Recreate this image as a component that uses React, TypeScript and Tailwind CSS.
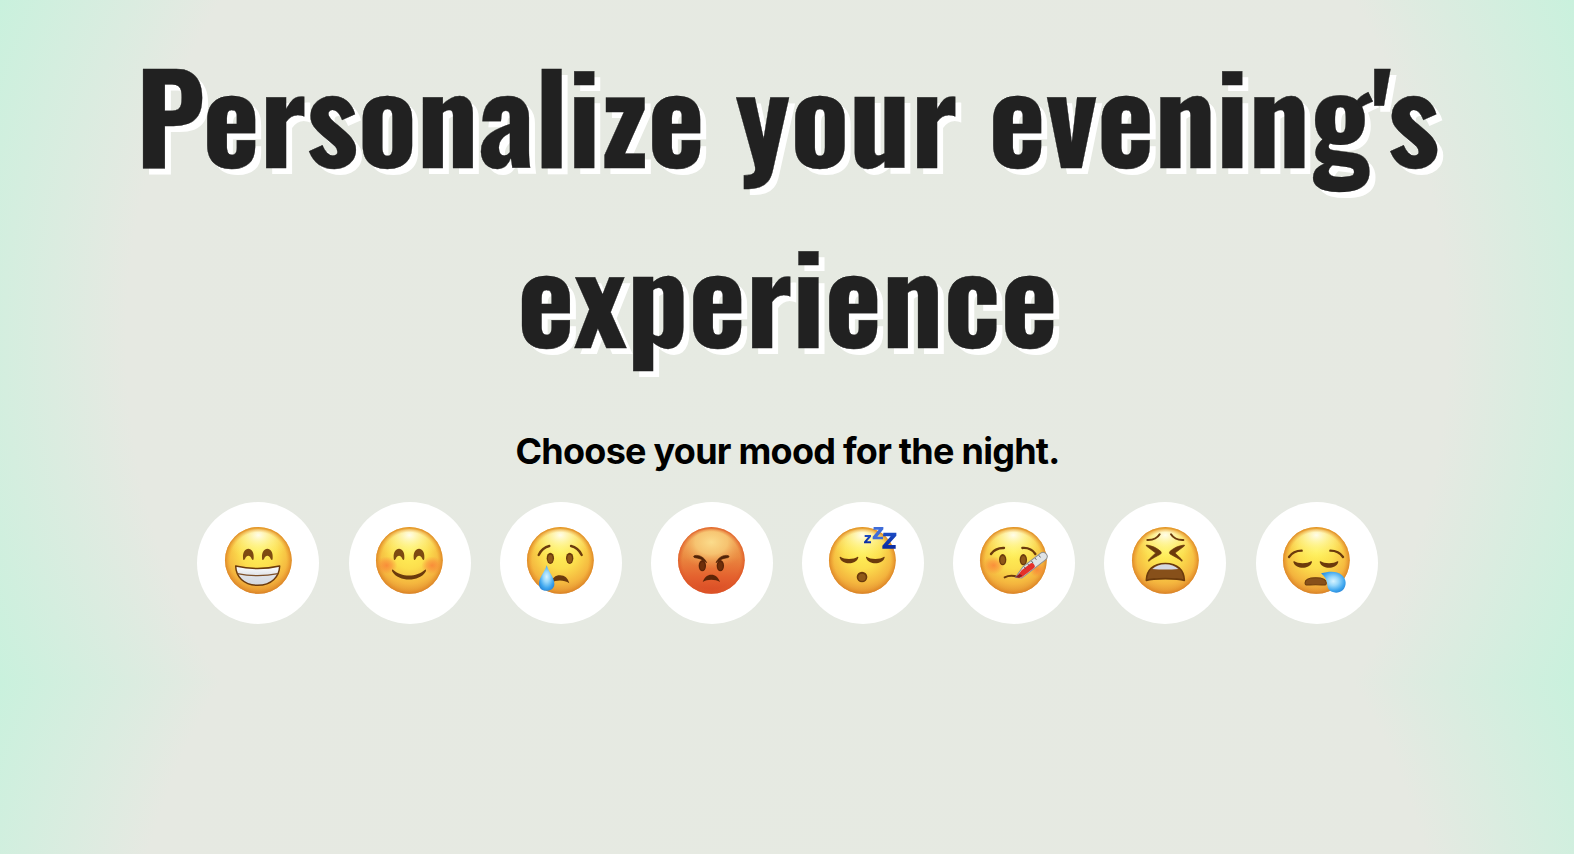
import type { ReactNode } from "react";

const BROWN = "#6b3a0c";

function Gradients() {
  return (
    <svg className="absolute size-0" aria-hidden="true">
      <defs>
        <radialGradient id="face" cx="0.5" cy="0.36" r="0.66">
          <stop offset="0" stopColor="#fff158" />
          <stop offset="0.4" stopColor="#fcdf4e" />
          <stop offset="0.75" stopColor="#f4b53e" />
          <stop offset="0.92" stopColor="#e69834" />
          <stop offset="1" stopColor="#cd7826" />
        </radialGradient>
        <radialGradient id="rim" cx="0.5" cy="0.5" r="0.5">
          <stop offset="0.84" stopColor="#f0a030" stopOpacity="0" />
          <stop offset="1" stopColor="#db8426" stopOpacity="0.9" />
        </radialGradient>
        <radialGradient id="shine" cx="0.5" cy="0.14" r="0.58">
          <stop offset="0" stopColor="#fffef2" stopOpacity="0.95" />
          <stop offset="0.4" stopColor="#fffbb8" stopOpacity="0.55" />
          <stop offset="1" stopColor="#fff26a" stopOpacity="0" />
        </radialGradient>
        <linearGradient id="angry" x1="0" y1="0" x2="0" y2="1">
          <stop offset="0" stopColor="#ee9a4a" />
          <stop offset="0.45" stopColor="#ea8840" />
          <stop offset="0.75" stopColor="#e4612e" />
          <stop offset="1" stopColor="#d94a25" />
        </linearGradient>
        <radialGradient id="angryRim" cx="0.5" cy="0.5" r="0.5">
          <stop offset="0.86" stopColor="#e2622c" stopOpacity="0" />
          <stop offset="1" stopColor="#dc5426" stopOpacity="0.75" />
        </radialGradient>
        <radialGradient id="angryShine" cx="0.5" cy="0.3" r="0.6">
          <stop offset="0" stopColor="#fbdc8c" />
          <stop offset="0.45" stopColor="#f8cc78" stopOpacity="0.85" />
          <stop offset="1" stopColor="#ee9a4c" stopOpacity="0" />
        </radialGradient>
        <radialGradient id="blush">
          <stop offset="0" stopColor="#fa7a35" stopOpacity="0.75" />
          <stop offset="0.5" stopColor="#fa8438" stopOpacity="0.5" />
          <stop offset="1" stopColor="#fa8a3a" stopOpacity="0" />
        </radialGradient>
        <linearGradient id="teeth" x1="0" y1="0" x2="0" y2="1">
          <stop offset="0" stopColor="#ffffff" />
          <stop offset="0.5" stopColor="#dfe2e8" />
          <stop offset="1" stopColor="#d3d7de" />
        </linearGradient>
        <radialGradient id="tear" cx="0.5" cy="0.45" r="0.6">
          <stop offset="0" stopColor="#d6f3ff" />
          <stop offset="0.35" stopColor="#98d8fb" />
          <stop offset="0.75" stopColor="#3ea6ee" />
          <stop offset="1" stopColor="#2a86d8" />
        </radialGradient>
        <linearGradient id="zed" x1="0" y1="0" x2="0" y2="1">
          <stop offset="0" stopColor="#1c4cc4" />
          <stop offset="1" stopColor="#0a2aa0" />
        </linearGradient>
      </defs>
    </svg>
  );
}

function Face({ label, angry = false, children }: { label: string; angry?: boolean; children: ReactNode }) {
  return (
    <svg viewBox="0 0 200 200" role="img" aria-label={label} className="h-[66.7px] w-[66.7px] overflow-visible">
      <circle cx="100" cy="100" r="100" fill={angry ? "url(#angry)" : "url(#face)"} />
      <ellipse cx="100" cy="72" rx="90" ry="66" fill={angry ? "url(#angryShine)" : "url(#shine)"} />
      <circle cx="100" cy="100" r="100" fill={angry ? "url(#angryRim)" : "url(#rim)"} />
      {children}
    </svg>
  );
}

function ArchEye({ x }: { x: number }) {
  return (
    <path
      transform={`translate(${x} 0)`}
      d="M-16 92C-17 76-10 65 0 65S17 76 16 92C16 101 12 101 9 94C6 84-6 84-9 94C-12 101-16 101-16 92Z"
      fill="#7d4a12"
    />
  );
}

function OvalEye({ x, y, dark = false }: { x: number; y: number; dark?: boolean }) {
  return (
    <g>
      <ellipse cx={x} cy={y} rx="11" ry="17" fill={dark ? "#5c2407" : BROWN} />
      <ellipse cx={x} cy={y + 1} rx="7" ry="12" fill={dark ? "#6e2e0a" : "#8f5818"} />
    </g>
  );
}

function ClosedEye({ x, y }: { x: number; y: number }) {
  return (
    <path
      transform={`translate(${x} ${y})`}
      d="M-25-9C-16-1 16-1 25-9C28-11 29-8 27-5C20 15-20 15-27-5C-29-8-28-11-25-9Z"
      fill={BROWN}
    />
  );
}

function Brow({ d }: { d: string }) {
  return <path d={d} fill="none" stroke={BROWN} strokeWidth="7" strokeLinecap="round" strokeLinejoin="round" />;
}

const moods: { name: string; face: ReactNode }[] = [
  {
    name: "Grinning",
    face: (
      <Face label="Grinning">
        <ArchEye x={70} />
        <ArchEye x={127} />
        <path
          d="M32 117Q98 132 164 117C163 148 141 175 98 175S33 148 32 117Z"
          fill="url(#teeth)"
          stroke={BROWN}
          strokeWidth="4.5"
          strokeLinejoin="round"
        />
        <path d="M37 140Q98 152 159 140" fill="none" stroke="#7d4f28" strokeWidth="4" />
      </Face>
    ),
  },
  {
    name: "Happy",
    face: (
      <Face label="Happy">
        <ellipse cx="32" cy="115" rx="32" ry="27" fill="url(#blush)" />
        <ellipse cx="168" cy="115" rx="32" ry="27" fill="url(#blush)" />
        <ArchEye x={69} />
        <ArchEye x={129} />
        <path d="M51 128C75 151 123 151 147 128C150 127 151 130 149 134C130 165 68 165 49 134C47 130 48 127 51 128Z" fill={BROWN} />
      </Face>
    ),
  },
  {
    name: "Sad",
    face: (
      <Face label="Sad">
        <Brow d="M35 84Q46 61 67 57" />
        <Brow d="M132 57Q153 61 164 84" />
        <OvalEye x={70} y={94} />
        <OvalEye x={128} y={94} />
        <path d="M72 168C77 153 84 145 99 145S122 153 127 169C111 158 88 158 72 168Z" fill={BROWN} />
        <path d="M59 115C64 134 82 152 82 170C82 184 72 191 58 191S36 184 36 170C36 152 54 134 59 115Z" fill="url(#tear)" />
      </Face>
    ),
  },
  {
    name: "Angry",
    face: (
      <Face label="Angry" angry>
        <OvalEye x={73} y={116} dark />
        <OvalEye x={127} y={116} dark />
        <path d="M49 86C64 82 80 92 86 107C72 96 62 94 51 92C46 91 46 87 49 86Z" fill="#522307" stroke="#522307" strokeWidth="2" />
        <path d="M151 86C136 82 120 92 114 107C128 96 138 94 149 92C154 91 154 87 151 86Z" fill="#522307" stroke="#522307" strokeWidth="2" />
        <path d="M74 165C80 149 88 143 100 143S120 149 126 165C112 156 88 156 74 165Z" fill="#5c2407" />
      </Face>
    ),
  },
  {
    name: "Sleeping",
    face: (
      <Face label="Sleeping">
        <ClosedEye x={60} y={99} />
        <ClosedEye x={139} y={99} />
        <circle cx="99" cy="150" r="16" fill={BROWN} />
        <circle cx="99" cy="151" r="11" fill="#8f5818" />
        <g fill="url(#zed)">
          <path d="M107 24H126V29L114 43H126V49H105V44L117 30H107Z" />
          <path d="M134 0H163V7L145 29H162V37H131V29L149 8H133Z" fill="#3f6cd8" />
          <path d="M163 17H202V26L177 54H200V65H160V56L185 28H162Z" />
        </g>
      </Face>
    ),
  },
  {
    name: "Sick",
    face: (
      <Face label="Sick">
        <ellipse cx="41" cy="115" rx="32" ry="27" fill="url(#blush)" />
        <ellipse cx="172" cy="128" rx="24" ry="22" fill="url(#blush)" />
        <Brow d="M33 81Q46 62 72 63" />
        <Brow d="M127 63Q153 61 166 81" />
        <OvalEye x={68} y={98} />
        <OvalEye x={130} y={98} />
        <path d="M74 151Q90 143 112 149" fill="none" stroke={BROWN} strokeWidth="6" strokeLinecap="round" />
        <g transform="translate(113 150) rotate(-37.5)">
          <path d="M-6-3L32-15H96C115-15 115 10 96 10H8Z" fill="#dfe3e6" stroke="#8d8f90" strokeWidth="3" />
          <path d="M0-3L22-9H54Q62-9 62 0T54 8H8Z" fill="#e5302a" />
          <path d="M-6-4H10L14 5H2Z" fill="#8f1c1c" />
          <path d="M34-13V-5M48-13V-7M62-13V-5M76-13V-7M90-13V-5" stroke="#555" strokeWidth="2.5" />
        </g>
      </Face>
    ),
  },
  {
    name: "Tired",
    face: (
      <Face label="Tired">
        <path d="M46 39Q72 40 83 22" fill="none" stroke={BROWN} strokeWidth="6" strokeLinecap="round" />
        <path d="M154 39Q128 40 117 22" fill="none" stroke={BROWN} strokeWidth="6" strokeLinecap="round" />
        <path d="M43 54C58 55 76 63 87 74C88 76 88 79 86 81C73 89 61 93 50 103C48 102 50 98 53 95L71 78L43 57Z" fill={BROWN} stroke={BROWN} strokeWidth="2" strokeLinejoin="round" />
        <path d="M157 54C142 55 124 63 113 74C112 76 112 79 114 81C127 89 139 93 150 103C152 102 150 98 147 95L129 78L157 57Z" fill={BROWN} stroke={BROWN} strokeWidth="2" strokeLinejoin="round" />
        <path d="M43 160C44 129 63 110 100 110S156 129 157 160C136 153 64 153 43 160Z" fill="#87501a" stroke={BROWN} strokeWidth="5" strokeLinejoin="round" />
        <path d="M61 126Q76 112 100 112T139 126Q100 129 61 126Z" fill="#d5d8e2" />
      </Face>
    ),
  },
  {
    name: "Exhausted",
    face: (
      <Face label="Exhausted">
        <Brow d="M18 90Q31 71 56 71" />
        <Brow d="M142 71Q167 71 180 90" />
        <ClosedEye x={59} y={112} />
        <ClosedEye x={138} y={112} />
        <path d="M66 168C66 156 80 152 98 152S130 156 130 168C130 178 122 173 98 173S66 178 66 168Z" fill="#87501a" stroke={BROWN} strokeWidth="3" />
        <path d="M114 139C140 132 162 132 176 144C192 157 191 178 179 190C167 200 146 199 137 187C129 176 139 160 114 139Z" fill="url(#tear)" />
      </Face>
    ),
  },
];

export default function App() {
  return (
    <main className="min-h-screen bg-[radial-gradient(circle,#e6eae2_0%,#e6e9e2_77%,#c9f1dd_100%)] bg-[length:100%_682px] pt-[22.5px] pr-8 pl-[33px]">
      <Gradients />
      <h1 className="mx-auto max-w-[1400px] text-center font-['Oswald','Roboto_Condensed',sans-serif] text-[121.8px] leading-[180.5px] font-bold text-[#212121] [-webkit-text-stroke:0.3px_#212121] [text-shadow:6px_6px_0_#fff]">
        Personalize your evening's experience
      </h1>
      <h2 className="mt-[43.5px] text-center font-['Inter',sans-serif] text-[36px] leading-[48px] font-bold tracking-[-0.75px] text-black">
        Choose your mood for the night.
      </h2>
      <div className="mt-[27px] flex justify-center gap-[29.2px]">
        {moods.map((mood) => (
          <button
            key={mood.name}
            type="button"
            aria-label={mood.name}
            className="flex h-[122px] w-[122px] items-center justify-center rounded-full bg-white pr-px pb-[5px]"
          >
            {mood.face}
          </button>
        ))}
      </div>
    </main>
  );
}
